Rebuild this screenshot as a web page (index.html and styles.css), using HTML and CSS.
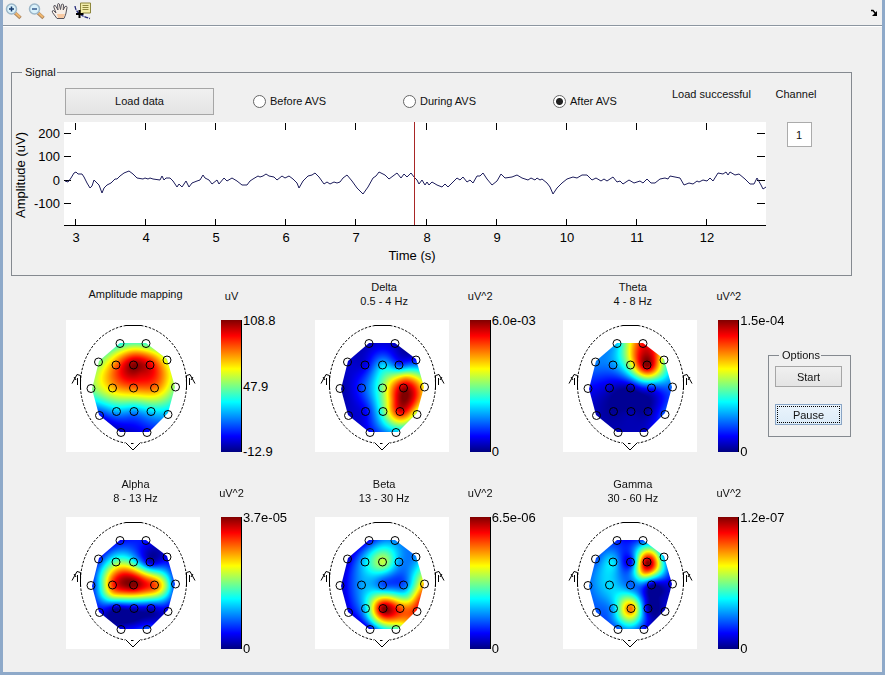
FILE: index.html
```html
<!DOCTYPE html>
<html lang="en">
<head>
<meta charset="utf-8">
<title>EEG mapping</title>
<link rel="stylesheet" href="styles.css">
</head>
<body>
<svg class="defs" aria-hidden="true">
  <symbol id="head" viewBox="0 0 134 132">
    <g fill="none" stroke="#000" stroke-width="1">
      <path d="M60 5.5h15" />
      <path stroke-dasharray="2.500 1.500" d="M60 5.500A53 59 0 0 0 14.500 64A53 59 0 0 0 59 123M75 5.500A53 59 0 0 1 120.500 64A53 59 0 0 1 75 123M65 123.500h4"/>
      <path d="M59.500 122.500l7.500 7.500l7.500-7.500"/>
      <path d="M14.500 69.500v-14l-3.500-1l-5 9M11.500 58v7M8 57l2 3M120.500 69.500v-14l3.500-1l5 9M123.500 58v7M127 57l-2 3"/>
      <g stroke-width="1">
        <circle cx="54" cy="23.500" r="4"/><circle cx="80" cy="23.500" r="4"/>
        <circle cx="32.500" cy="42" r="4"/><circle cx="50" cy="45" r="4"/><circle cx="67.500" cy="45" r="4"/><circle cx="84" cy="45" r="4"/><circle cx="101" cy="40" r="4"/>
        <circle cx="25" cy="68.500" r="4"/><circle cx="46.500" cy="68" r="4"/><circle cx="67.500" cy="68" r="4"/><circle cx="88.500" cy="68" r="4"/><circle cx="109.500" cy="67" r="4"/>
        <circle cx="33.500" cy="95.500" r="4"/><circle cx="50.500" cy="91.500" r="4"/><circle cx="68" cy="91.500" r="4"/><circle cx="85" cy="91.500" r="4"/><circle cx="102" cy="94.500" r="4"/>
        <circle cx="55" cy="112.500" r="4"/><circle cx="81" cy="112.500" r="4"/>
      </g>
    </g>
  </symbol>
</svg>

<header class="toolbar">
  <button class="tool" aria-label="Zoom in">
    <svg width="18" height="18" viewBox="0 0 18 18"><path d="M10 11l5.500 5" stroke="#a98460" stroke-width="3.500"/><path d="M10.500 11l4.500 4.300" stroke="#efb66d" stroke-width="2"/><circle cx="6.500" cy="7" r="5" fill="#d9f1fb" stroke="#9bb6c8" stroke-width="1.500"/><path d="M4 7h5M6.500 4.500v5" stroke="#173a6e" stroke-width="1.500"/></svg>
  </button>
  <button class="tool" aria-label="Zoom out">
    <svg width="18" height="18" viewBox="0 0 18 18"><path d="M10 11l5.500 5" stroke="#a98460" stroke-width="3.500"/><path d="M10.500 11l4.500 4.300" stroke="#efb66d" stroke-width="2"/><circle cx="6.500" cy="7" r="5" fill="#d9f1fb" stroke="#9bb6c8" stroke-width="1.500"/><path d="M4 7h5" stroke="#35598d" stroke-width="1.500"/></svg>
  </button>
  <button class="tool" aria-label="Pan">
    <svg width="18" height="18" viewBox="0 0 18 18"><path d="M6 16.500L1.500 10.500Q.5 8.500 2.500 8.500L5 11L2.800 5Q2.500 3 4.300 3.500L7 8L6.500 2.500Q7 .8 8.300 2L9.500 7.500L10.500 2.500Q12 1.200 12.500 3L12.200 8L14 4.500Q16 3.500 16 5.500L14.800 12L13 16.500Z" fill="#f7eee6" stroke="#55535c" stroke-width="1"/><path d="M6 12h8l-1.500 4H7z" fill="#f7c9a2"/></svg>
  </button>
  <button class="tool" aria-label="Data cursor">
    <svg width="18" height="18" viewBox="0 0 18 18"><path d="M1 4Q2 13 16 16.500" fill="none" stroke="#23297a" stroke-width="1.300" stroke-dasharray="4 1"/><path d="M6.500 1h10v10H9L6.500 12.500V1z" fill="#f3edaa" stroke="#8e873d"/><path d="M8.500 3.500h6M8.500 5.500h6M8.500 7.500h6" stroke="#8e873d"/><path d="M2 12h7.500M5.500 8v8" stroke="#000" stroke-width="2"/></svg>
  </button>
  <button class="dock" aria-label="Dock">
    <svg width="8" height="8" viewBox="0 0 8 8"><path d="M1 1.500h2l2.500 3" fill="none" stroke="#000" stroke-width="1.500"/><path d="M7 2v5H2z"/></svg>
  </button>
</header>

<main>
  <fieldset class="signal">
    <legend>Signal</legend>
    <div class="controls">
      <button class="btn load">Load data</button>
      <label class="radio"><input type="radio" name="phase"> Before AVS</label>
      <label class="radio"><input type="radio" name="phase"> During AVS</label>
      <label class="radio"><input type="radio" name="phase" checked> After AVS</label>
      <output class="status">Load successful</output>
    </div>
    <div class="channel">
      <label for="channel">Channel</label>
      <input id="channel" type="text" value="1">
    </div>
    <svg class="chart" viewBox="0 0 755 146" role="img" aria-label="Amplitude over time">
      <rect x="52" width="702" height="103" fill="#fff"/>
      <path stroke="#000" d="M52 103.500h702M63.500 97v6M133.500 97v6M203.500 97v6M273.500 97v6M343.500 97v6M414.500 97v6M484.500 97v6M554.500 97v6M624.500 97v6M694.500 97v6M63.500 1v7M133.500 1v7M203.500 1v7M273.500 1v7M343.500 1v7M414.500 1v7M484.500 1v7M554.500 1v7M624.500 1v7M694.500 1v7M52 11.500h7M52 34.500h7M52 58.500h7M52 81.500h7M745 11.500h8M745 34.500h8M745 58.500h8M745 81.500h8"/>
      <polyline class="trace" points="53,59 56,60 59,56 62,51 64,50 66,52 70,52 72,55 75,61 78,66 80,64 82,58 85,61 87,63 90,71 92,66 95,63 99,61 103,57 105,57 108,54 112,51 117,49 121,52 125,56 131,57 133,56 136,57 138,56 141,57 148,58 150,54 152,58 154,56 158,56 161,59 165,65 167,62 170,65 174,59 177,65 180,61 185,59 188,58 191,53 193,56 197,58 200,62 205,58 207,62 212,56 215,59 220,56 225,59 230,63 235,63 238,59 241,57 246,54 248,55 251,54 254,52 257,54 262,55 265,58 270,54 273,56 277,54 281,57 285,61 287,66 291,59 296,54 300,53 303,51 307,55 312,62 315,60 318,62 322,60 325,61 328,60 331,56 335,53 340,59 345,66 348,69 351,72 356,65 361,56 364,54 367,50 373,53 377,57 381,54 385,51 389,56 392,52 395,55 399,51 402,55 405,58 407,62 410,58 413,63 415,60 417,63 420,60 425,63 430,65 433,62 436,65 441,60 445,56 448,58 451,55 455,60 458,58 461,61 465,54 468,54 471,51 475,57 480,63 485,59 489,52 493,56 500,55 505,53 510,56 516,58 519,56 523,58 525,56 528,58 530,57 535,61 538,65 541,72 545,66 550,61 555,57 561,55 565,56 570,53 575,53 577,55 580,58 584,56 589,59 592,57 595,59 601,55 605,60 608,59 611,62 617,58 622,61 628,59 631,61 635,57 639,61 643,61 648,57 653,56 656,57 658,54 663,55 668,56 672,63 677,61 681,62 685,59 687,60 691,58 695,59 698,56 701,59 706,51 711,52 714,50 716,53 718,50 723,53 727,52 733,57 738,62 742,62 745,56 749,63 751,67 754,65"/>
      <path stroke="#a82626" d="M402.500 0v103"/>
      <g class="ticks" text-anchor="middle">
        <text x="64" y="120">3</text><text x="134" y="120">4</text><text x="204" y="120">5</text><text x="274" y="120">6</text><text x="344" y="120">7</text><text x="415" y="120">8</text><text x="485" y="120">9</text><text x="555" y="120">10</text><text x="625" y="120">11</text><text x="695" y="120">12</text>
        <text x="400" y="138">Time (s)</text>
        <text transform="translate(13 53) rotate(-90)">Amplitude (uV)</text>
      </g>
      <g class="ticks" text-anchor="end">
        <text x="48" y="16">200</text><text x="48" y="39">100</text><text x="48" y="63">0</text><text x="48" y="86">-100</text>
      </g>
    </svg>
  </fieldset>

  <div class="lower">
    <section class="map">
      <h2>Amplitude mapping</h2><p class="unit">uV</p>
      <div class="tile"><canvas width="134" height="132" data-map="amplitude"></canvas><svg><use href="#head"/></svg></div>
      <div class="bar"></div>
      <div class="scale"><span>108.8</span><span>47.9</span><span>-12.9</span></div>
    </section>
    <section class="map">
      <h2>Delta<br>0.5 - 4 Hz</h2><p class="unit">uV^2</p>
      <div class="tile"><canvas width="134" height="132" data-map="delta"></canvas><svg><use href="#head"/></svg></div>
      <div class="bar"></div>
      <div class="scale"><span>6.0e-03</span><span>0</span></div>
    </section>
    <section class="map">
      <h2>Theta<br>4 - 8 Hz</h2><p class="unit">uV^2</p>
      <div class="tile"><canvas width="134" height="132" data-map="theta"></canvas><svg><use href="#head"/></svg></div>
      <div class="bar"></div>
      <div class="scale"><span>1.5e-04</span><span>0</span></div>
    </section>
    <fieldset class="options">
      <legend>Options</legend>
      <button class="btn">Start</button>
      <button class="btn focused">Pause</button>
    </fieldset>
    <section class="map">
      <h2>Alpha<br>8 - 13 Hz</h2><p class="unit">uV^2</p>
      <div class="tile"><canvas width="134" height="132" data-map="alpha"></canvas><svg><use href="#head"/></svg></div>
      <div class="bar"></div>
      <div class="scale"><span>3.7e-05</span><span>0</span></div>
    </section>
    <section class="map">
      <h2>Beta<br>13 - 30 Hz</h2><p class="unit">uV^2</p>
      <div class="tile"><canvas width="134" height="132" data-map="beta"></canvas><svg><use href="#head"/></svg></div>
      <div class="bar"></div>
      <div class="scale"><span>6.5e-06</span><span>0</span></div>
    </section>
    <section class="map">
      <h2>Gamma<br>30 - 60 Hz</h2><p class="unit">uV^2</p>
      <div class="tile"><canvas width="134" height="132" data-map="gamma"></canvas><svg><use href="#head"/></svg></div>
      <div class="bar"></div>
      <div class="scale"><span>1.2e-07</span><span>0</span></div>
    </section>
  </div>
</main>
<script src="maps.js"></script>
</body>
</html>
```
FILE: styles.css
```css
* { box-sizing: border-box; }
body {
  margin: 0;
  min-height: 100vh;
  background: #f0f0f0;
  border: solid #8ea9c9;
  border-width: 0 3px 3px;
  font: 11px/14px "Liberation Sans", Arial, sans-serif;
  color: #111;
}
.defs { position: absolute; width: 0; height: 0; }
button, input { font: inherit; color: inherit; }

.toolbar {
  display: flex;
  align-items: center;
  gap: 5px;
  height: 26px;
  padding: 0 4px 4px 2px;
  border-bottom: 1px solid #8c96a0;
  box-shadow: 0 1px #fff;
}
.tool, .dock { padding: 0; border: 0; background: none; display: flex; }
.tool { width: 18px; }
.dock { margin-left: auto; padding-top: 4px; }

fieldset { margin: 0; min-width: 0; border: 1px solid #858a90; }
legend { line-height: 15px; padding: 0 1px 0 3px; }

.signal {
  display: grid;
  grid-template-columns: minmax(0, 1fr) 84px;
  margin: 39px 30px 0 8px;
  padding: 0 0 7px;
}
.signal legend { margin-left: 10px; }
.controls {
  display: grid;
  grid-template-columns: 188px 150px 150px 119px auto;
  align-items: center;
  height: 42px;
  padding-left: 53px;
}
.btn {
  padding: 0;
  border: 1px solid #a6a6a6;
  background: linear-gradient(#f0f0f0, #e4e4e4);
}
.load { width: 149px; height: 27px; }
.radio { display: flex; align-items: center; gap: 4px; }
.radio input {
  appearance: none;
  width: 13px;
  height: 13px;
  margin: 0;
  border: 1px solid #666;
  border-radius: 50%;
  background: #fff;
}
.radio input:checked { background: radial-gradient(circle, #222 3px, #fff 4px); }
.status { align-self: start; padding-top: 7px; white-space: nowrap; }
.channel {
  grid-row: span 2;
  display: flex;
  flex-direction: column;
  align-items: center;
  gap: 21px;
  padding: 7px 26px 0 0;
}
.channel input {
  width: 25px;
  height: 25px;
  margin-left: 6px;
  padding: 0;
  border: 1px solid #ababab;
  background: #fff;
  text-align: center;
}
.chart { display: block; width: 100%; height: auto; }
.ticks { font-size: 13px; fill: #000; }
.trace { fill: none; stroke: #1d1d5c; stroke-width: 1; }

.lower {
  display: grid;
  grid-template-columns: 249fr 249fr 205fr 83px;
  row-gap: 21px;
  margin: 0 31px 0 63px;
}
.map {
  display: grid;
  grid-template-columns: 134px 21px 1fr;
  grid-template-rows: 44px 132px;
  column-gap: 21px;
  min-width: 0;
}
.map h2 {
  display: flex;
  align-items: center;
  justify-content: center;
  height: 28px;
  margin: 4px 0 0;
  padding-left: 5px;
  font: inherit;
  text-align: center;
}
.unit {
  display: flex;
  justify-content: center;
  margin: 13px 0 0;
}
.tile { grid-row: 2; display: grid; background: #fff; }
.tile canvas, .tile svg { grid-area: 1 / 1; width: 134px; height: 132px; }
.bar {
  grid-area: 2 / 2;
  border-right: 1px solid #000;
  background: linear-gradient(#800000, #f00 12%, #ff0 37%, #0ff 62%, #00f 88%, #000080);
}
.scale {
  grid-area: 2 / 3;
  display: flex;
  flex-direction: column;
  justify-content: space-between;
  margin: -6px 0 -7px -20px;
  font-size: 13px;
  color: #000;
  white-space: nowrap;
}
.options {
  align-self: start;
  display: flex;
  flex-direction: column;
  gap: 17px;
  margin-top: 72px;
  padding: 3px 8px 11px 6px;
}
.options legend { margin-left: 4px; }
.options .btn { height: 21px; }
.options .focused {
  border-color: #8aa5c5;
  background: linear-gradient(#eaf4fc, #dcebf8);
  outline: 1px dotted #000;
  outline-offset: -3px;
}
```
FILE: maps.js
```js
// Electrode positions: Fp1 Fp2 / F7 F3 Fz F4 F8 / T3 C3 Cz C4 T4 / T5 P3 Pz P4 T6 / O1 O2
const sites = [
  [54, 23], [80, 23],
  [33, 42], [50, 45], [68, 45], [84, 45], [101, 40],
  [25, 69], [46, 68], [68, 68], [89, 68], [110, 67],
  [34, 96], [50, 91], [68, 91], [85, 91], [102, 94],
  [55, 112], [81, 112]
];
const outline = [[54, 23], [80, 23], [101, 39], [109, 67], [102, 93], [83, 112], [54, 112], [33, 95], [26, 69], [33, 41]];

// Normalised electrode levels, then intermediate samples as [x, y, level]
const maps = {
  amplitude: { v: [.4, .43, .5, .78, 1, .9, .57, .48, .68, .76, .75, .48, .12, .3, .27, .34, .3, .05, .12], extra: [[74, 53, .93]] },
  delta: { v: [.06, .06, .08, .1, .34, .2, .14, .03, .18, .52, .97, .6, .07, .12, .47, .9, .5, .12, .3], extra: [[87, 78, 1], [90, 57, .7], [75, 80, .7]] },
  theta: { v: [.33, .87, .25, .27, .58, 1, .5, .12, .07, .03, .15, .22, .05, .02, .04, .03, .22, .05, .07], extra: [[81, 34, .95], [84, 56, .6]] },
  alpha: { v: [.12, .14, .15, .5, .4, .08, .1, .13, .82, 1, .8, .1, .1, .03, .07, .07, .08, .12, .22], extra: [[58, 57, .88], [35, 68, .42], [100, 68, .5], [46, 78, .6], [68, 79, .6]] },
  beta: { v: [.12, .25, .08, .35, .56, .28, .27, .05, .28, .2, .22, .74, .08, .34, 1, .8, .88, .1, .42], extra: [[84, 58, .2], [104, 80, .8], [92, 80, .5], [100, 60, .42]] },
  gamma: { v: [.15, .2, .2, .35, .14, 1, .27, .22, .34, .22, .02, .08, .2, .3, .76, .04, .08, .2, .12], extra: [[96, 80, .03], [80, 55, .72], [76, 65, .3], [68, 81, .5], [82, 34, .6], [92, 42, .72], [68, 103, .5]] }
};

function kernel(x1, y1, x2, y2) {
  const d = (x1 - x2) ** 2 + (y1 - y2) ** 2;
  return d ? d * Math.log(d) / 2000 : 0;
}

function solve(a, b) {
  const n = b.length;
  for (let i = 0; i < n; i++) {
    let p = i;
    for (let r = i; r < n; r++) if (Math.abs(a[r][i]) > Math.abs(a[p][i])) p = r;
    [a[i], a[p]] = [a[p], a[i]];
    [b[i], b[p]] = [b[p], b[i]];
    for (let r = i + 1; r < n; r++) {
      const f = a[r][i] / a[i][i];
      for (let c = i; c < n; c++) a[r][c] -= f * a[i][c];
      b[r] -= f * b[i];
    }
  }
  const w = Array(n).fill(0);
  for (let i = n - 1; i >= 0; i--) {
    let s = b[i];
    for (let c = i + 1; c < n; c++) s -= a[i][c] * w[c];
    w[i] = s / a[i][i];
  }
  return w;
}

function jet(v) {
  return [3, 2, 1].map(k => 255 * Math.max(0, Math.min(1, 1.5 - Math.abs(4 * v - k))));
}

function draw(canvas) {
  const m = maps[canvas.dataset.map];
  const pts = sites.map((s, i) => [...s, m.v[i]]).concat(m.extra);
  const n = pts.length;
  const a = pts.map(p => [...pts.map(q => kernel(p[0], p[1], q[0], q[1])), 1, p[0] / 100, p[1] / 100]);
  for (const f of [() => 1, p => p[0] / 100, p => p[1] / 100]) a.push([...pts.map(f), 0, 0, 0]);
  const w = solve(a, [...pts.map(p => p[2]), 0, 0, 0]);

  const layer = document.createElement('canvas');
  layer.width = canvas.width;
  layer.height = canvas.height;
  const lctx = layer.getContext('2d');
  const img = lctx.createImageData(layer.width, layer.height);
  for (let y = 0; y < layer.height; y++) {
    for (let x = 0; x < layer.width; x++) {
      let v = w[n] + w[n + 1] * x / 100 + w[n + 2] * y / 100;
      for (let i = 0; i < n; i++) v += w[i] * kernel(x, y, pts[i][0], pts[i][1]);
      img.data.set([...jet(Math.max(.02, Math.min(1, v))), 255], (y * layer.width + x) * 4);
    }
  }
  lctx.putImageData(img, 0, 0);

  const ctx = canvas.getContext('2d');
  ctx.beginPath();
  outline.forEach(p => ctx.lineTo(p[0], p[1]));
  ctx.closePath();
  ctx.clip();
  ctx.drawImage(layer, 0, 0);
}

document.querySelectorAll('canvas[data-map]').forEach(draw);
```
